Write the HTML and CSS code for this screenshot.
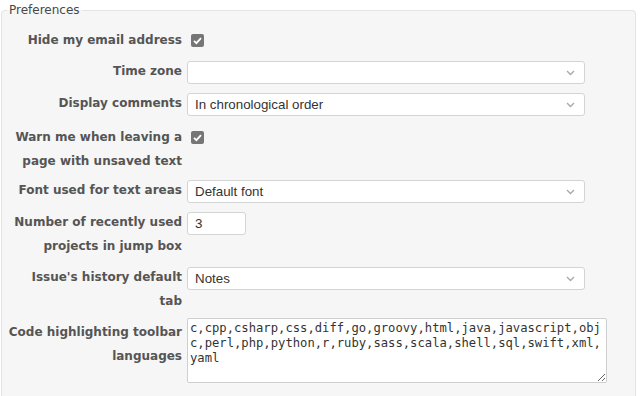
FILE: index.html
```html
<!DOCTYPE html>
<html lang="en">
<head>
  <meta charset="UTF-8" />
  <title>Preferences</title>
  <link rel="stylesheet" href="styles.css">
</head>
<body>
  <fieldset class="box tabular">
    <legend>Preferences</legend>

    <div class="field">
      <label for="pref_hide_mail">Hide my email address</label>
      <input type="checkbox" id="pref_hide_mail" class="check" checked />
    </div>

    <div class="field">
      <label for="pref_time_zone">Time zone</label>
      <select id="pref_time_zone" class="select">
        <option></option>
      </select>
    </div>

    <div class="field">
      <label for="pref_comments_sorting">Display comments</label>
      <select id="pref_comments_sorting" class="select">
        <option>In chronological order</option>
      </select>
    </div>

    <div class="field tall">
      <label for="pref_warn">Warn me when leaving a page with unsaved text</label>
      <input type="checkbox" id="pref_warn" class="check" checked />
    </div>

    <div class="field">
      <label for="pref_textarea_font">Font used for text areas</label>
      <select id="pref_textarea_font" class="select">
        <option>Default font</option>
      </select>
    </div>

    <div class="field">
      <label for="pref_recently_used">Number of recently used projects in jump box</label>
      <input type="text" id="pref_recently_used" class="text-input small" value="3" />
    </div>

    <div class="field">
      <label for="pref_history_tab">Issue's history default tab</label>
      <select id="pref_history_tab" class="select">
        <option>Notes</option>
      </select>
    </div>

    <div class="field">
      <label for="pref_toolbar_languages">Code highlighting toolbar languages</label>
      <textarea id="pref_toolbar_languages" class="code-area" rows="4">c,cpp,csharp,css,diff,go,groovy,html,java,javascript,objc,perl,php,python,r,ruby,sass,scala,shell,sql,swift,xml,yaml</textarea>
    </div>
  </fieldset>
</body>
</html>
```

FILE: styles.css
```css
:root {
  --color-bg: #ffffff;
  --color-box: #f6f6f6;
  --color-box-border: #e4e4e4;
  --color-label: #555555;
  --color-text: #333333;
  --color-input-border: #d4d4d4;
  --font-main: 'DejaVu Sans', Verdana, sans-serif;
  --font-input: 'Liberation Sans', Arial, sans-serif;
  --font-mono: 'DejaVu Sans Mono', monospace;
}

*, *::before, *::after {
  box-sizing: border-box;
}

body {
  margin: 0;
  padding: 3px 5px 0 1px;
  background: var(--color-bg);
  font-family: var(--font-main);
  font-size: 12px;
  color: var(--color-text);
  overflow: hidden;
}

/* Box */
.box {
  margin: 0;
  padding: 11px 5px 10px 5px;
  width: 635px;
  min-height: 420px;
  background: var(--color-box);
  border: 1px solid var(--color-box-border);
  border-radius: 4px;
}

.box legend {
  padding: 0 2px;
  color: #484848;
  font-size: 12px;
}

/* Tabular rows */
.tabular {
  display: flex;
  flex-direction: column;
  gap: 7px;
}

.field {
  display: grid;
  grid-template-columns: 175px 1fr;
  column-gap: 5px;
  align-items: start;
}

.field.tall {
  margin-top: 2px;
  margin-bottom: -2px;
}

.field label {
  font-weight: bold;
  text-align: right;
  line-height: 24px;
  color: var(--color-label);
}

/* Controls */
.check {
  appearance: none;
  margin: 6px 0 0 4px;
  width: 13px;
  height: 13px;
  border-radius: 2px;
  background: #767676 url("data:image/svg+xml,%3Csvg xmlns='http://www.w3.org/2000/svg' width='13' height='13' viewBox='0 0 13 13'%3E%3Cpath d='M3 6.8l2.4 2.4L10 4.2' fill='none' stroke='%23fff' stroke-width='1.8'/%3E%3C/svg%3E") no-repeat center;
}

.select,
.text-input {
  margin: 2px 0 0 0;
  height: 23px;
  padding: 0 24px 0 7px;
  border: 1px solid var(--color-input-border);
  border-radius: 3px;
  background-color: #fff;
  font-family: var(--font-input);
  font-size: 13.33px;
  color: var(--color-text);
}

.select {
  appearance: none;
  width: 398px;
  background-image: url("data:image/svg+xml,%3Csvg xmlns='http://www.w3.org/2000/svg' width='9' height='6' viewBox='0 0 9 6'%3E%3Cpath d='M1 1l3.5 3.5L8 1' fill='none' stroke='%23a9a9a9' stroke-width='1.4'/%3E%3C/svg%3E");
  background-repeat: no-repeat;
  background-position: right 9px center;
}

.text-input.small {
  width: 59px;
  padding-right: 4px;
}

.code-area {
  display: block;
  margin: -2px 0 0 0;
  width: 420px;
  height: 65px;
  padding: 2px 1px 2px 2px;
  border: 1px solid #cfcfcf;
  border-radius: 2px;
  background: #fff;
  font-family: var(--font-mono);
  font-size: 12.2px;
  line-height: 15px;
  color: #333;
  resize: vertical;
}
```
